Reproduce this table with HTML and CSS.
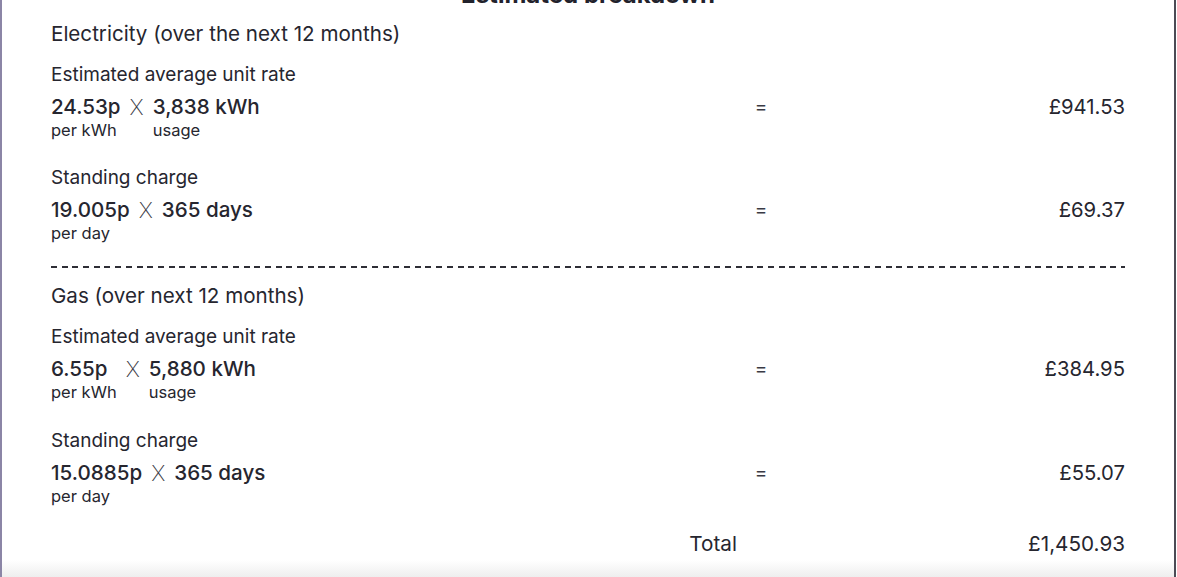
FILE: index.html
```html
<!DOCTYPE html>
<html lang="en">
<head>
<meta charset="utf-8">
<title>Estimated breakdown</title>
<link rel="stylesheet" href="styles.css">
</head>
<body>
<div class="card">
  <h2 class="title">Estimated breakdown</h2>

  <section class="fuel">
    <h3 class="fuel-title">Electricity (over the next 12 months)</h3>

    <div class="item">
      <div class="label">Estimated average unit rate</div>
      <div class="calc">
        <div class="part"><span class="val">24.53p</span><span class="sub">per kWh</span></div>
        <span class="times">X</span>
        <div class="part"><span class="val">3,838 kWh</span><span class="sub">usage</span></div>
      </div>
      <div class="eq">=</div>
      <div class="amount">£941.53</div>
    </div>

    <div class="item">
      <div class="label">Standing charge</div>
      <div class="calc">
        <div class="part"><span class="val">19.005p</span><span class="sub">per day</span></div>
        <span class="times">X</span>
        <div class="part"><span class="val">365 days</span><span class="sub">&nbsp;</span></div>
      </div>
      <div class="eq">=</div>
      <div class="amount">£69.37</div>
    </div>
  </section>

  <div class="divider"></div>

  <section class="fuel">
    <h3 class="fuel-title">Gas (over next 12 months)</h3>

    <div class="item">
      <div class="label">Estimated average unit rate</div>
      <div class="calc">
        <div class="part"><span class="val">6.55p</span><span class="sub">per kWh</span></div>
        <span class="times">X</span>
        <div class="part"><span class="val">5,880 kWh</span><span class="sub">usage</span></div>
      </div>
      <div class="eq">=</div>
      <div class="amount">£384.95</div>
    </div>

    <div class="item">
      <div class="label">Standing charge</div>
      <div class="calc">
        <div class="part"><span class="val">15.0885p</span><span class="sub">per day</span></div>
        <span class="times">X</span>
        <div class="part"><span class="val">365 days</span><span class="sub">&nbsp;</span></div>
      </div>
      <div class="eq">=</div>
      <div class="amount">£55.07</div>
    </div>
  </section>

  <div class="total-row">
    <div class="total-label">Total</div>
    <div class="total-amount">£1,450.93</div>
  </div>

  <div class="footer-shade"></div>
</div>
</body>
</html>
```

FILE: styles.css
```css
html, body {
  margin: 0;
  padding: 0;
  background: #ffffff;
  height: 577px;
  overflow: hidden;
}

body {
  font-family: Inter, "Open Sans", "Liberation Sans", sans-serif;
  color: #26262f;
}

.card {
  box-sizing: border-box;
  width: 1176px;
  height: 577px;
  border-left: 2px solid #8b85a6;
  border-right: 2px solid #4b4b55;
  padding: 0 49px;
  display: flex;
  flex-direction: column;
  overflow: hidden;
}

.title {
  margin: -21px 0 0;
  font-size: 24px;
  line-height: 32px;
  font-weight: 700;
  text-align: center;
  color: #22222c;
}

.fuel-title {
  margin: 9px 0 0;
  font-size: 20.6px;
  line-height: 28px;
  font-weight: 400;
}

.fuel + .divider + .fuel .fuel-title {
  margin-top: 14px;
}

.item {
  display: grid;
  grid-template-columns: 698px 24px 1fr;
  grid-template-rows: auto auto;
  margin-top: 26px;
}

.fuel-title + .item {
  margin-top: 15px;
}

.fuel + .divider + .fuel .item + .item {
  margin-top: 27px;
}

.label {
  grid-column: 1 / -1;
  font-size: 19px;
  line-height: 24px;
  margin-bottom: 7px;
}

.calc {
  display: flex;
  align-items: flex-start;
  gap: 9px;
}

.part {
  display: flex;
  flex-direction: column;
}

.val {
  font-size: 20.6px;
  line-height: 26px;
  font-weight: 500;
}

.sub {
  font-size: 16.5px;
  line-height: 20px;
}

.times {
  font-size: 22px;
  line-height: 26px;
  font-weight: 200;
  color: #3a3a44;
}

.eq {
  text-align: center;
  font-size: 19px;
  line-height: 26px;
  color: #3a3a44;
}

.amount {
  text-align: right;
  font-size: 20.3px;
  line-height: 26px;
}

.divider {
  margin-top: 23px;
  height: 2px;
  background: repeating-linear-gradient(to right, #2e2e36 0 6px, transparent 6px 10.7px);
}

.total-row {
  display: grid;
  grid-template-columns: 698px 24px 1fr;
  margin-top: 24px;
  font-size: 20.7px;
  line-height: 28px;
}

.total-label {
  text-align: right;
  padding-right: 12px;
}

.total-amount {
  grid-column: 3;
  text-align: right;
}

.footer-shade {
  flex: 1;
  margin: 2px -49px 0;
  background: linear-gradient(to bottom, #ffffff, #eeeeee);
}
```
